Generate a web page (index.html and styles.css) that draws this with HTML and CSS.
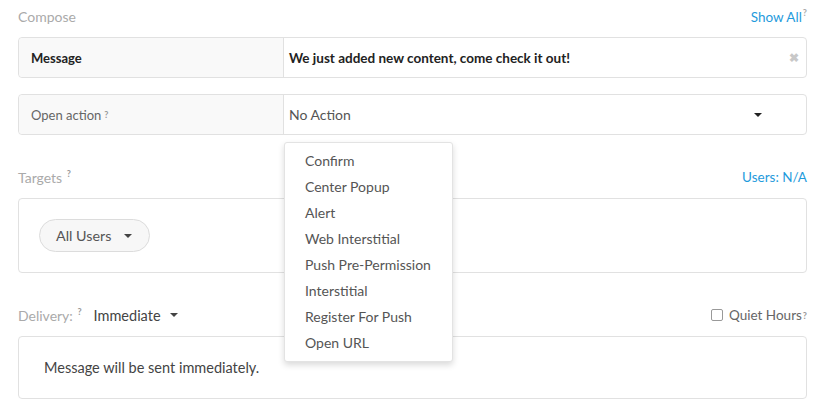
FILE: index.html
```html
<!DOCTYPE html>
<html lang="en">
<head>
  <meta charset="UTF-8">
  <title>Compose Message</title>
  <link rel="stylesheet" href="styles.css">
</head>
<body>
  <div class="page">

    <!-- Compose -->
    <div class="section-head first">
      <span class="muted">Compose</span>
      <a class="link">Show All<sup class="help">?</sup></a>
    </div>

    <div class="field-row">
      <div class="field-label strong">Message</div>
      <div class="field-value strong">
        We just added new content, come check it out!
        <span class="clear">&#10006;</span>
      </div>
    </div>

    <div class="field-row gap">
      <div class="field-label">Open action <sup class="help spaced">?</sup></div>
      <div class="field-value grey">
        No Action
        <span class="caret"></span>
      </div>

      <ul class="menu">
        <li>Confirm</li>
        <li>Center Popup</li>
        <li>Alert</li>
        <li>Web Interstitial</li>
        <li>Push Pre-Permission</li>
        <li>Interstitial</li>
        <li>Register For Push</li>
        <li>Open URL</li>
      </ul>
    </div>

    <!-- Targets -->
    <div class="section-head">
      <span class="muted">Targets <sup class="help">?</sup></span>
      <a class="link">Users: N/A</a>
    </div>

    <div class="panel targets">
      <button class="pill">All Users <span class="caret"></span></button>
    </div>

    <!-- Delivery -->
    <div class="section-head">
      <span class="delivery">
        <span class="muted">Delivery: <sup class="help">?</sup></span>
        <span class="select">Immediate <span class="caret"></span></span>
      </span>
      <label class="quiet"><span class="box"></span>Quiet Hours<sup class="help">?</sup></label>
    </div>

    <div class="panel delivery-note">
      Message will be sent immediately.
    </div>

  </div>
</body>
</html>
```

FILE: styles.css
```css
body {
  margin: 0;
  font-family: Lato, "Open Sans", Arial, sans-serif;
  font-size: 14px;
  color: #444;
  background: #fff;
}

.page {
  padding: 0 14px 0 18px;
}

.section-head {
  display: flex;
  justify-content: space-between;
  align-items: center;
  height: 20px;
  margin-top: 32px;
  margin-bottom: 11px;
}

.section-head.first {
  margin-top: 6px;
}

.muted {
  color: #aaa;
  font-size: 14px;
}

.link {
  color: #1f9bdc;
  font-size: 13.5px;
}

.help {
  font-size: 9px;
  font-weight: bold;
  color: #999;
  vertical-align: 6px;
  margin-left: 1px;
}

.help.spaced {
  margin-left: 3px;
}

.link .help {
  color: #aaa;
}

.field-row {
  position: relative;
  display: flex;
  height: 39px;
  border: 1px solid #e1e1e1;
  border-radius: 4px;
}

.field-row.gap {
  margin-top: 16px;
}

.field-label {
  width: 252px;
  padding-left: 12px;
  display: flex;
  align-items: center;
  background: #f9f9f9;
  border-right: 1px solid #e1e1e1;
  border-radius: 4px 0 0 4px;
  color: #666;
  font-size: 13px;
}

.field-value {
  flex: 1;
  display: flex;
  align-items: center;
  padding: 0 12px 0 5px;
  position: relative;
}

.strong {
  font-weight: bold;
  color: #222;
}

.field-value.strong {
  font-size: 13.5px;
}

.grey {
  color: #555;
}

.clear {
  position: absolute;
  right: 7px;
  font-size: 12px;
  color: #c8c8c8;
}

.caret {
  display: inline-block;
  width: 0;
  height: 0;
  border-left: 4px solid transparent;
  border-right: 4px solid transparent;
  border-top: 4px solid #444;
  vertical-align: middle;
}

.field-value .caret {
  position: absolute;
  right: 44px;
  top: 18px;
  border-top-color: #222;
}

.menu {
  position: absolute;
  left: 265px;
  top: 47px;
  z-index: 2;
  width: 167px;
  margin: 0;
  padding: 5px 0;
  list-style: none;
  background: #fff;
  border: 1px solid #e3e3e3;
  border-radius: 3px;
  box-shadow: 0 3px 6px rgba(0, 0, 0, 0.15);
}

.menu li {
  height: 26px;
  line-height: 26px;
  padding-left: 20px;
  color: #555;
}

.panel {
  border: 1px solid #e1e1e1;
  border-radius: 4px;
}

.targets {
  height: 73px;
  padding: 0 20px;
  display: flex;
  align-items: center;
}

.pill {
  font: inherit;
  font-size: 14.3px;
  color: #555;
  height: 33px;
  width: 111px;
  padding: 0 0 0 16px;
  background: #f7f7f7;
  border: 1px solid #dcdcdc;
  border-radius: 17px;
  display: flex;
  align-items: center;
  gap: 13px;
}

.delivery {
  display: flex;
  align-items: center;
  gap: 12px;
}

.select {
  color: #444;
  font-size: 14.5px;
  display: flex;
  align-items: center;
  gap: 9px;
}

.quiet {
  display: flex;
  align-items: center;
  color: #666;
  font-size: 13.5px;
}

.quiet .box {
  width: 10px;
  height: 10px;
  border: 1px solid #999;
  border-radius: 2px;
  margin-right: 6px;
}

.delivery-note {
  height: 61px;
  padding: 0 25px;
  display: flex;
  align-items: center;
  color: #444;
  font-size: 14.5px;
}
```
